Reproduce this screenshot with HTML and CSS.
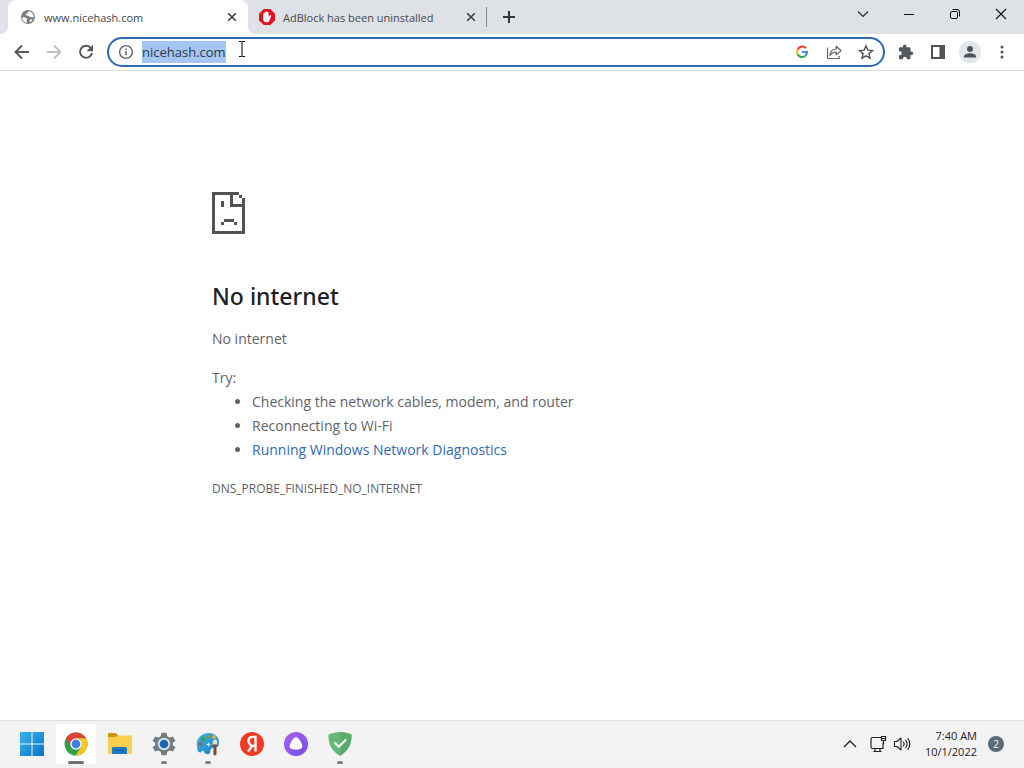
FILE: index.html
```html
<!DOCTYPE html>
<html lang="en">
<head>
<meta charset="utf-8">
<title>www.nicehash.com</title>
<link rel="stylesheet" href="styles.css">
</head>
<body>
<header class="browser">
  <div class="tabstrip">
    <div class="tab tab-active">
      <svg class="favicon" viewBox="0 0 16 16"><circle cx="8" cy="8" r="7" fill="#7b7e82"/><path d="M2.300 8.200c2 .1 3.800.2 4.500 1.500.5.900-.4 1.500-.2 2.600l.4 1.500C4 13.500 2 11 2.300 8.200zM8.500 2.200l-.6 1.700-2 1.100.2 1.400 2.300.3 1.500 1.400 2.500-.2 1.500.7C13.700 4.900 11.800 2.500 8.500 2.200zM10 10.500l2.600-.2c-.6 1.500-1.700 2.500-3.100 3z" fill="#fff"/></svg>
      <span class="tab-title">www.nicehash.com</span>
      <button class="tab-close" aria-label="Close tab"><svg width="16" height="16" viewBox="0 0 16 16"><path d="M4.200 4.200l7.600 7.600M11.800 4.200l-7.600 7.600" stroke="#3c4043" stroke-width="1.600"/></svg></button>
    </div>
    <div class="tab tab-idle">
      <svg class="favicon" viewBox="0 0 16 16"><path d="M4.700 0h6.600L16 4.700v6.600L11.300 16H4.700L0 11.300V4.700z" fill="#e2141f"/><path d="M4.100 8.200V5.100c0-.9 1.300-.9 1.300 0V3.700c0-1 1.400-1 1.400 0V3c0-1 1.400-1 1.400 0v.6c0-.9 1.400-.9 1.400 0v4.300l1.200-1.400c.8-.7 1.800-.1 1.300.8L10.200 12c-.5.900-1.200 1.300-2.300 1.300-2.400 0-3.800-1.300-3.800-3.300z" fill="#fff"/></svg>
      <span class="tab-title">AdBlock has been uninstalled</span>
      <button class="tab-close" aria-label="Close tab"><svg width="16" height="16" viewBox="0 0 16 16"><path d="M4.200 4.200l7.600 7.600M11.800 4.200l-7.600 7.600" stroke="#3c4043" stroke-width="1.600"/></svg></button>
    </div>
    <button class="new-tab" aria-label="New tab"><svg width="16" height="16" viewBox="0 0 16 16"><path d="M8 2v12M2 8h12" stroke="#303438" stroke-width="2"/></svg></button>
    <div class="window-controls">
      <button aria-label="Search tabs"><svg viewBox="0 0 16 16"><path d="M3 5.500l5 5 5-5" fill="none" stroke="#222" stroke-width="1.100"/></svg></button>
      <button aria-label="Minimize"><svg viewBox="0 0 16 16"><path d="M3 8.500h10" stroke="#111"/></svg></button>
      <button aria-label="Restore"><svg viewBox="0 0 16 16"><rect x="3.500" y="5.500" width="7" height="7" rx="1.500" fill="none" stroke="#111"/><path d="M5.500 3.500H10A2.500 2.500 0 0 1 12.500 6v4.500" fill="none" stroke="#111"/></svg></button>
      <button aria-label="Close"><svg viewBox="0 0 16 16"><path d="M3 3l10 10M13 3L3 13" stroke="#111" stroke-width="1.100"/></svg></button>
    </div>
  </div>
  <div class="toolbar">
    <div class="nav">
      <button aria-label="Back"><svg viewBox="0 0 16 16"><path d="M15 8H2M8 1.500L1.500 8 8 14.500" fill="none" stroke="#55585c" stroke-width="1.900"/></svg></button>
      <button aria-label="Forward" disabled><svg viewBox="0 0 16 16"><path d="M1 8h13M8 1.500L14.500 8 8 14.500" fill="none" stroke="#bdbfc2" stroke-width="1.800"/></svg></button>
      <button aria-label="Reload"><svg viewBox="0 0 16 16"><path d="M13 4.300A6 6 0 1 0 14 9" fill="none" stroke="#55585c" stroke-width="2"/><path d="M15 .8v6.500H8.500z" fill="#55585c"/></svg></button>
    </div>
    <form class="omnibox">
      <svg viewBox="0 0 16 16"><circle cx="8" cy="8" r="6.400" fill="none" stroke="#5f6368" stroke-width="1.400"/><path d="M8 7.200v4.100M8 4.500V6" stroke="#5f6368" stroke-width="1.600"/></svg>
      <input id="address" class="address" type="text" value="nicehash.com" aria-label="Address and search bar" spellcheck="false" autofocus>
      <button type="button" aria-label="Search with Google"><svg viewBox="0 0 16 16"><g fill="none" stroke-width="2.100"><path d="M12 4.200A5 5 0 0 0 3.600 5.700" stroke="#ea4335"/><path d="M3.600 5.700a5 5 0 0 0 0 4.600" stroke="#fbbc05"/><path d="M3.600 10.300A5 5 0 0 0 11 12" stroke="#34a853"/><path d="M11 12a5 5 0 0 0 2-4H8" stroke="#4285f4"/></g></svg></button>
      <button type="button" aria-label="Share this page"><svg viewBox="0 0 16 16"><path d="M1.500 3.500v11h11.500V12" fill="none" stroke="#5f6368" stroke-width="1.200"/><path d="M3.800 11.500C4.200 7.500 6.300 5 10.200 5V2.200L15 6.700l-4.800 4.200V8.200c-3 0-4.900 1-6.400 3.300z" fill="none" stroke="#5f6368" stroke-width="1.200" stroke-linejoin="round"/></svg></button>
      <button type="button" aria-label="Bookmark this tab"><svg viewBox="0 0 16 16"><path d="M8 1.800l1.800 4.300 4.700.4-3.600 3.100 1.100 4.600L8 11.800l-4 2.400 1.100-4.600-3.600-3.100 4.700-.4z" fill="none" stroke="#505357" stroke-width="1.400"/></svg></button>
      <svg class="pointer" viewBox="0 0 8 16"><path d="M1 .5h2.500l.5.500.5-.5H7M4 1v14M1 15.500h2.500L4 15l.5.500H7" fill="none" stroke="#000"/></svg>
    </form>
    <div class="actions">
      <button aria-label="Extensions"><svg viewBox="0 0 16 16"><path d="M13.500 7.500h-1V4.700c0-.8-.6-1.400-1.400-1.400H8.500v-.9a1.800 1.800 0 0 0-3.600 0v.9H2.300C1.500 3.300.9 3.900.9 4.700v2.600h.9a2 2 0 0 1 0 4H.9v2.600c0 .8.6 1.400 1.400 1.400h2.600v-1a2 2 0 0 1 3.900 0v1h2.300c.8 0 1.400-.6 1.400-1.400v-2.800h1a1.800 1.800 0 0 0 0-3.600z" fill="#55585c"/></svg></button>
      <button aria-label="Side panel"><svg viewBox="0 0 16 16"><path d="M1 1h14v14H1zM3 3v10h6.500V3z" fill="#505357" fill-rule="evenodd"/></svg></button>
      <button class="profile" aria-label="Profile"><svg viewBox="0 0 16 16"><circle cx="8" cy="5" r="3" fill="#4b5563"/><path d="M2 13.500v-1C2 10.300 5.500 9.300 8 9.300s6 1 6 3.200v1z" fill="#4b5563"/></svg></button>
      <button aria-label="Menu"><svg viewBox="0 0 16 16"><circle cx="8" cy="3" r="1.500" fill="#505357"/><circle cx="8" cy="8" r="1.500" fill="#505357"/><circle cx="8" cy="13" r="1.500" fill="#505357"/></svg></button>
    </div>
  </div>
</header>
<main class="error-page">
  <div class="error-content">
    <svg class="sad-page" width="33" height="42" viewBox="0 0 33 42" shape-rendering="crispEdges" aria-hidden="true"><path d="M0 0h27v3h3v3h3v36H0zM3 3v36h27V15H18V3zM21 3v9h9V6h-3V3zM9 9h3v6H9zM12 27h10v3H12zM9 30h3v3H9zM22 30h3v3h-3z" fill="#535353" fill-rule="evenodd"/></svg>
    <h1>No internet</h1>
    <p class="summary">No internet</p>
    <p class="try">Try:</p>
    <ul>
      <li>Checking the network cables, modem, and router</li>
      <li>Reconnecting to Wi-Fi</li>
      <li><a href="#diagnostics">Running Windows Network Diagnostics</a></li>
    </ul>
    <p class="code">DNS_PROBE_FINISHED_NO_INTERNET</p>
  </div>
</main>
<footer class="taskbar">
  <div class="apps">
    <button aria-label="Start"><svg viewBox="0 0 24 24"><defs><linearGradient id="win" x1="0" y1="0" x2="1" y2="1"><stop stop-color="#39b5ed"/><stop offset="1" stop-color="#0873c8"/></linearGradient></defs><path d="M0 0h11.500v11.500H0zM12.500 0H24v11.500H12.500zM0 12.500h11.500V24H0zM12.500 12.500H24V24H12.500z" fill="url(#win)"/></svg></button>
    <button class="app-current" aria-label="Google Chrome"><svg viewBox="0 0 24 24"><circle cx="12" cy="12" r="11.500" fill="#33a14c"/><path d="M2 6.300A11.500 11.500 0 0 1 22 6.300H12L7 15z" fill="#dc4436"/><path d="M22 6.300A11.500 11.500 0 0 1 11.700 23.500L17 14.900 12 6.300z" fill="#fbc521"/><circle cx="12" cy="12" r="5.700" fill="#fff"/><circle cx="12" cy="12" r="4.400" fill="#3f7de8"/></svg></button>
    <button aria-label="File Explorer"><svg viewBox="0 0 24 24"><path d="M0 2.500C0 1.700.7 1 1.500 1H8l2.500 3H24v6H0z" fill="#c99619"/><path d="M0 5h8l2-1.500h14V21c0 .6-.4 1-1 1H1c-.6 0-1-.4-1-1z" fill="#f8d04b"/><path d="M4 22v-5.500c0-.8.700-1.500 1.500-1.500h12c.8 0 1.500.7 1.500 1.500V22z" fill="#1f79c3"/><path d="M7 18h9v1H7z" fill="#155d9d"/></svg></button>
    <button class="app-open" aria-label="Settings"><svg viewBox="0 0 24 24"><path d="M9.500.8h5l.8 3.400 2.200 1.200 3.400-1 2.500 4.300-2.600 2.400v1.800l2.600 2.400-2.500 4.300-3.400-1-2.200 1.200-.8 3.400h-5l-.8-3.400-2.200-1.200-3.400 1-2.500-4.300 2.600-2.400v-1.800L.6 8.700l2.500-4.300 3.400 1 2.200-1.200z" fill="#747b83"/><circle cx="12" cy="12" r="6.200" fill="#d7e0e8"/><circle cx="12" cy="12" r="4.300" fill="#1767b1"/></svg></button>
    <button class="app-open" aria-label="Paint"><svg viewBox="0 0 24 24"><defs><linearGradient id="palette" x1="0" y1="0" x2="1" y2="1"><stop stop-color="#40bce4"/><stop offset="1" stop-color="#1878c9"/></linearGradient></defs><path d="M5 20.500C-.5 20 2 15.500.8 13.500 0 6 6 1 13 1c6 .1 10.500 4.500 10 10.500-.3 4.500-4.500 3.500-7.500 5-2 1-.5 4.500-2.500 5.500-2.500 1-5-1-5.500-3-.5-1.500-2 .5-2.500 1.500z" fill="url(#palette)"/><circle cx="7" cy="7" r="2.200" fill="#51974f"/><circle cx="12.500" cy="4.500" r="2.100" fill="#789d45"/><circle cx="18" cy="5" r="2" fill="#d7b342"/><circle cx="4.800" cy="12" r="2.200" fill="#806e63"/><path d="M12.500 10l.6 1.800 1.900.7-1.900.7-.6 1.800-.6-1.800-1.900-.7 1.900-.7z" fill="#d9f4ff"/><path d="M17 8.500Q19 6.500 21 8.500l.5 4.500h-5z" fill="#eadac5"/><path d="M16.500 12.500h5v2h-1V22.500q-1.500 2-3 0v-8h-1z" fill="#7b4c37"/></svg></button>
    <button aria-label="Yandex"><svg class="yandex" viewBox="0 0 24 24"><circle cx="12" cy="12" r="12" fill="#ed3b24"/><path d="M15.500 19.500V4.800h-2.400c-3 0-4.600 1.500-4.600 4.100 0 2 .9 3.200 2.700 4.300m4.300.7h-3.200L8 19.500" fill="none" stroke="#fff" stroke-width="2.300"/></svg></button>
    <button aria-label="Alice"><svg viewBox="0 0 24 24"><defs><linearGradient id="alice" x1="0" y1="0" x2="1" y2="1"><stop stop-color="#ad61ed"/><stop offset="1" stop-color="#704fe8"/></linearGradient></defs><circle cx="12" cy="12" r="12" fill="url(#alice)"/><path d="M12 5.300c2.600 0 6.800 6.800 6.300 9.500-.5 3.800-12.100 3.800-12.600 0C5.200 12.100 9.400 5.300 12 5.300z" fill="#fff"/></svg></button>
    <button class="app-open" aria-label="AdGuard"><svg viewBox="0 0 24 24"><path d="M12 0c3.700 0 8 .9 11.500 2.500 0 4 .5 14.100-11.500 21.500C0 16.600.5 6.500.5 2.500 4 .9 8.300 0 12 0z" fill="#65b878"/><path d="M12 0c3.700 0 8 .9 11.500 2.500 0 4 .5 14.100-11.500 21.500z" fill="#5aab6d"/><path d="M6.500 10.500l4.300 4.300L18 7.500" fill="none" stroke="#fff" stroke-width="2"/></svg></button>
  </div>
  <div class="tray">
    <button aria-label="Show hidden icons"><svg viewBox="0 0 18 18"><path d="M3 12l6-6 6 6" fill="none" stroke="#222" stroke-width="1.400"/></svg></button>
    <button aria-label="Network"><svg viewBox="0 0 18 18"><path d="M12 2.500H3.500q-1.500 0-1.500 1.500v8q0 1.500 1.500 1.500H14V8M6 14v2.500M11 14v2.500M4.500 16.500h8M12.500 1.500h4v4h-4zM14.500 5.500V9M12.500 3.500h4" fill="none" stroke="#222" stroke-width="1.200"/></svg></button>
    <button aria-label="Volume"><svg viewBox="0 0 18 18"><path d="M1.500 6.500H4L8 3v12l-4-3.500H1.500zM10.300 6.500q1.500 2.500 0 5M12.500 4.700q3 4.300 0 8.600M14.700 3q4 6 0 12" fill="none" stroke="#222" stroke-width="1.100" stroke-linejoin="round"/></svg></button>
    <button class="clock"><time>7:40 AM</time><time>10/1/2022</time></button>
    <button class="badge" aria-label="2 notifications">2</button>
  </div>
</footer>
<script src="script.js"></script>
</body>
</html>
```
FILE: styles.css
```css
* { box-sizing: border-box; }
body {
  margin: 0;
  min-height: 100vh;
  display: flex;
  flex-direction: column;
  background: #fff;
  font-family: "Open Sans", "Noto Sans", sans-serif;
  color: #5f6368;
}
button {
  display: flex;
  align-items: center;
  justify-content: center;
  padding: 0;
  border: 0;
  background: none;
  color: inherit;
  font: inherit;
}
svg { display: block; flex: none; }
.browser { border-bottom: 1px solid #dadcdc; }
.tabstrip {
  display: flex;
  height: 34px;
  padding-left: 8px;
  background: #dee1e6;
}
.tab {
  position: relative;
  display: flex;
  align-items: center;
  width: 240px;
  padding: 0 8px 0 12px;
  gap: 8px;
  font-size: 11px;
  color: #45484c;
}
.tab-active { background: #fff; border-radius: 8px 8px 0 0; }
.tab-active::before, .tab-active::after {
  content: "";
  position: absolute;
  bottom: 0;
  width: 8px;
  height: 8px;
}
.tab-active::before { right: 100%; background: radial-gradient(circle at 0 0, transparent 8px, #fff 8px); }
.tab-active::after { left: 100%; background: radial-gradient(circle at 100% 0, transparent 8px, #fff 8px); }
.tab-idle {
  width: 239px;
  padding: 0 7px 0 11px;
  border-right: 1px solid transparent;
  border-image: linear-gradient(transparent 8px, #868b90 8px, #868b90 26px, transparent 26px) 1;
}
.tab-title { flex: 1; white-space: nowrap; }
.favicon { width: 16px; height: 16px; }
.new-tab { width: 44px; }
.window-controls { display: flex; margin-left: auto; height: 28px; }
.window-controls button { width: 46px; }
.window-controls svg { width: 16px; height: 16px; }
.toolbar { display: flex; align-items: center; height: 36px; }
.nav { display: flex; padding: 0 5px 0 6px; }
.nav button { width: 32px; height: 32px; }
.nav svg, .omnibox svg, .actions svg { width: 16px; height: 16px; }
.omnibox {
  position: relative;
  flex: 1;
  display: flex;
  align-items: center;
  height: 30px;
  padding: 0 1px 0 9px;
  border: 2px solid #2f69b5;
  border-radius: 15px;
}
.address {
  flex: 1;
  min-width: 0;
  height: 22px;
  margin-left: 8px;
  padding: 0;
  border: 0;
  outline: 0;
  background: transparent;
  color: #303a48;
  font: 13px/22px "Open Sans", "Noto Sans", sans-serif;
}
.address::selection { background: #a5c5f4; color: #303a48; }
.omnibox button { width: 32px; height: 26px; }
.omnibox .pointer { position: absolute; left: 129px; top: 2px; width: 8px; height: 16px; }
.actions { display: flex; align-items: center; padding: 0 6px 0 5px; }
.actions button { width: 32px; height: 32px; }
.actions .profile { width: 22px; height: 22px; margin: 0 5px; border-radius: 50%; background: #e2e6eb; }
.error-page { flex: 1; padding: 121px 24px 24px; }
.error-content { max-width: 600px; margin: 0 auto; font-size: 14px; line-height: 24px; }
h1 {
  margin: 45px 0 14px;
  font-family: "Noto Sans", "Open Sans", sans-serif;
  font-size: 23px;
  line-height: 34px;
  font-weight: 500;
  color: #202124;
}
p { margin: 0; }
.summary { margin-bottom: 15px; }
ul { margin: 0; padding-left: 40px; }
a { color: #3269b5; text-decoration: none; }
.code { margin-top: 15px; font-size: 12px; }
.taskbar {
  display: flex;
  justify-content: space-between;
  height: 48px;
  padding-bottom: 1px;
  border-top: 1px solid #dfdfdf;
  background: #f3f3f3;
}
.apps { display: flex; align-items: center; padding-left: 12px; gap: 4px; }
.apps button { position: relative; width: 40px; height: 40px; border-radius: 4px; }
.apps svg { width: 24px; height: 24px; }
.apps .app-current { background: #fff; }
.app-current::after, .app-open::after {
  content: "";
  position: absolute;
  bottom: 0;
  width: 6px;
  height: 3px;
  border-radius: 2px;
  background: #808487;
}
.app-current::after { width: 16px; background: #6b7277; }
.tray { display: flex; align-items: center; padding-right: 20px; gap: 6px; color: #222; }
.tray svg { width: 18px; height: 18px; }
.tray button:first-child { margin-right: 4px; }
.tray .clock { flex-direction: column; align-items: flex-end; margin: 0 5px 0 8px; font-size: 11px; line-height: 16px; }
.tray .badge { width: 16px; height: 16px; border-radius: 50%; background: #5b6b77; color: #fff; font-size: 10px; line-height: 16px; }
```
FILE: script.js
```js
const address = document.getElementById("address");
address.focus();
address.select();
```
